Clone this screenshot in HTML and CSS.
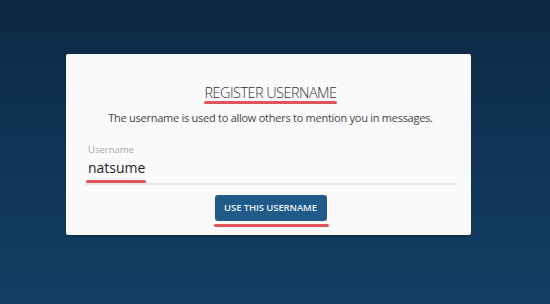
FILE: index.html
```html
<!DOCTYPE html>
<html lang="en">
<head>
<meta charset="utf-8">
<title>Register Username</title>
<link rel="stylesheet" href="styles.css">
</head>
<body>
<div class="page">
  <div class="card">
    <h1 class="title"><span class="mark mark-title">REGISTER USERNAME</span></h1>
    <p class="desc">The username is used to allow others to mention you in messages.</p>
    <div class="field">
      <label class="label">Username</label>
      <div class="input"><span class="mark mark-input">natsume</span></div>
    </div>
    <div class="actions">
      <span class="mark mark-btn"><button class="btn">USE THIS USERNAME</button></span>
    </div>
  </div>
</div>
</body>
</html>
```

FILE: styles.css
```css
html, body {
  margin: 0;
  padding: 0;
}
body {
  width: 550px;
  height: 304px;
  overflow: hidden;
  background: linear-gradient(180deg, #0c2843 0%, #0f3354 45%, #143f63 100%);
  font-family: "Open Sans", "Noto Sans", sans-serif;
}
.page {
  padding: 54px 0 0 66px;
}
.card {
  box-sizing: border-box;
  width: 405px;
  height: 181px;
  background: #fafafa;
  border-radius: 2px;
  display: flex;
  flex-direction: column;
  align-items: center;
  padding: 30px 15px 0 19px;
  box-shadow: 0 1px 2px rgba(0,0,0,0.3);
}
.title {
  margin: 0;
  font-weight: 300;
  font-size: 14.5px;
  line-height: 18px;
  color: #333;
  letter-spacing: -0.55px;
}
.desc {
  margin: 8px 0 0;
  font-size: 11px;
  line-height: 16px;
  color: #444;
  letter-spacing: -0.26px;
}
.field {
  align-self: stretch;
  margin-top: 18px;
  display: flex;
  flex-direction: column;
}
.label {
  font-size: 9.5px;
  line-height: 12px;
  color: #a8a8a8;
  padding-left: 3px;
}
.input {
  padding: 3px 0 6px 3px;
  font-size: 14px;
  line-height: 18px;
  color: #1e1e1e;
  font-weight: 500;
  border-bottom: 2px solid #e8e8e8;
}
.actions {
  margin-top: 10px;
  display: flex;
  justify-content: center;
}
.btn {
  display: block;
  border: none;
  background: #1f5a8b;
  color: #e9f0f7;
  font-family: "Open Sans", "Noto Sans", sans-serif;
  font-size: 9.5px;
  font-weight: 600;
  line-height: 26px;
  height: 26px;
  width: 112px;
  padding: 0;
  border-radius: 3px;
  letter-spacing: -0.1px;
}
.mark {
  position: relative;
  display: inline-block;
}
.mark::after {
  content: "";
  position: absolute;
  height: 3px;
  border-radius: 2px;
  background: #e0545e;
}
.mark-title::after {
  left: -1px;
  right: -1px;
  bottom: -2px;
}
.mark-input::after {
  left: -2px;
  right: -1px;
  bottom: -6px;
}
.mark-btn::after {
  left: -1px;
  right: -2px;
  bottom: -6px;
}
```
